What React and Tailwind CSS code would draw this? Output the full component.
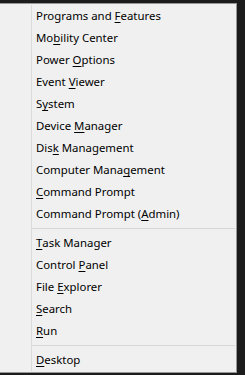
const groups = [
  [
    ["Programs and ", "F", "eatures"],
    ["Mo", "b", "ility Center"],
    ["Power ", "O", "ptions"],
    ["Event ", "V", "iewer"],
    ["S", "y", "stem"],
    ["Device ", "M", "anager"],
    ["Dis", "k", " Management"],
    ["Computer Mana", "g", "ement"],
    ["", "C", "ommand Prompt"],
    ["Command Prompt (", "A", "dmin)"],
  ],
  [
    ["", "T", "ask Manager"],
    ["Control ", "P", "anel"],
    ["File ", "E", "xplorer"],
    ["", "S", "earch"],
    ["", "R", "un"],
  ],
  [["", "D", "esktop"]],
];

function Item({ parts }) {
  const [a, k, b] = parts;
  return (
    <div className="h-[22px] flex items-center pl-[36px] text-[11.4px] text-black whitespace-pre">
      {a}
      <span className="underline underline-offset-2">{k}</span>
      {b}
    </div>
  );
}

export default function App() {
  return (
    <div className="w-[245px] h-[375px] bg-[#1c1c1c] overflow-hidden pt-[3px]" style={{ fontFamily: '"Noto Sans", "Open Sans", sans-serif' }}>
      <div className="w-[237px] h-[370px] bg-[#f0f0f0] border-r border-b border-t border-[#979797] pt-[1px] relative">
        <div className="absolute left-[31px] top-[1px] bottom-[1px] w-px bg-[#dadada]" />
        {groups.map((g, gi) => (
          <div key={gi}>
            {gi > 0 && (
              <div className="h-[7px] flex items-center pl-[32px] pr-[1px]">
                <div className="h-px w-full bg-[#d7d7d7]" />
              </div>
            )}
            {g.map((p, i) => (
              <Item key={i} parts={p} />
            ))}
          </div>
        ))}
      </div>
    </div>
  );
}
